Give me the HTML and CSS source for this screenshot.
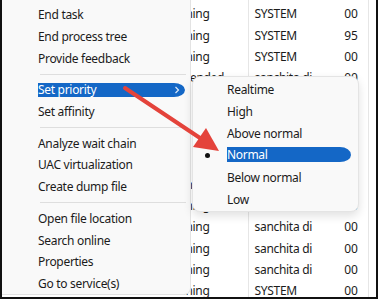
FILE: index.html
```html
<!DOCTYPE html>
<html lang="en">
<head>
    <meta charset="UTF-8">
    <meta name="viewport" content="width=device-width, initial-scale=1.0">
    <title>Task Manager - Set priority</title>
    <link rel="stylesheet" href="styles.css">
</head>
<body>

<div class="screen">
    <table class="procs">
        <colgroup>
            <col class="col-name">
            <col class="col-status">
            <col class="col-user">
            <col class="col-cpu">
            <col class="col-rest">
        </colgroup>
        <tbody>
            <tr><td></td><td>Running</td><td>LOCAL SERVI</td><td class="num">00</td><td></td></tr>
            <tr><td></td><td>Running</td><td>SYSTEM</td><td class="num">00</td><td></td></tr>
            <tr><td></td><td>Running</td><td>SYSTEM</td><td class="num">95</td><td></td></tr>
            <tr><td></td><td>Running</td><td>SYSTEM</td><td class="num">00</td><td></td></tr>
            <tr><td></td><td>Suspended</td><td>sanchita di</td><td class="num">00</td><td></td></tr>
            <tr><td></td><td></td><td></td><td></td><td></td></tr>
            <tr><td></td><td></td><td></td><td></td><td></td></tr>
            <tr><td></td><td></td><td></td><td></td><td></td></tr>
            <tr><td></td><td></td><td></td><td></td><td></td></tr>
            <tr><td></td><td>Running</td><td>sanchita di</td><td class="num">00</td><td></td></tr>
            <tr><td></td><td>Running</td><td>sanchita di</td><td class="num">00</td><td></td></tr>
            <tr><td></td><td>Running</td><td>sanchita di</td><td class="num">00</td><td></td></tr>
            <tr><td></td><td>Running</td><td>sanchita di</td><td class="num">00</td><td></td></tr>
            <tr><td></td><td>Running</td><td>sanchita di</td><td class="num">00</td><td></td></tr>
            <tr><td></td><td>Running</td><td>SYSTEM</td><td class="num">00</td><td></td></tr>
        </tbody>
    </table>

    <div class="menu main-menu">
        <div class="item">End task</div>
        <div class="item">End process tree</div>
        <div class="item">Provide feedback</div>
        <div class="sep"></div>
        <div class="item active">
            Set priority
            <svg class="chevron" width="6" height="8" viewBox="0 0 6 8"><path d="M1.5 1 L4.5 4 L1.5 7" fill="none" stroke="#dce9f8" stroke-width="1.2"/></svg>
        </div>
        <div class="item">Set affinity</div>
        <div class="sep"></div>
        <div class="item">Analyze wait chain</div>
        <div class="item">UAC virtualization</div>
        <div class="item">Create dump file</div>
        <div class="sep"></div>
        <div class="item">Open file location</div>
        <div class="item">Search online</div>
        <div class="item">Properties</div>
        <div class="item">Go to service(s)</div>
    </div>

    <div class="menu sub-menu">
        <div class="item">Realtime</div>
        <div class="item">High</div>
        <div class="item">Above normal</div>
        <div class="item active"><span class="dot"></span>Normal</div>
        <div class="item">Below normal</div>
        <div class="item">Low</div>
    </div>

    <!-- red annotation arrow -->
    <svg class="arrow" width="378" height="299" viewBox="0 0 378 299">
        <line x1="125" y1="88" x2="203" y2="140" stroke="#e4433b" stroke-width="4" stroke-linecap="round"/>
        <polygon points="219,151 193,147 206,128" fill="#e4433b"/>
    </svg>
</div>

</body>
</html>
```

FILE: styles.css
```css
body {
    margin: 0;
    font-family: "Noto Sans", "Open Sans", sans-serif;
    font-size: 12px;
    letter-spacing: -0.3px;
    color: #1b1b1b;
    background: #fff;
}
.screen {
    position: relative;
    width: 378px;
    height: 299px;
    box-sizing: border-box;
    border: 2px solid #111;
    border-top: none;
    overflow: hidden;
    background: #fff;
}
.procs {
    border-collapse: collapse;
    table-layout: fixed;
    width: 374px;
    margin-top: -18px;
}
.col-name { width: 154px; }
.col-status { width: 92px; }
.col-user { width: 70px; }
.col-cpu { width: 50px; }
.col-rest { width: 8px; }
.procs td {
    height: 21.3px;
    padding: 0 0 0 8px;
    white-space: nowrap;
    overflow: hidden;
}
.procs td:nth-child(2),
.procs td:nth-child(4) {
    border-right: 1px solid #e6e6e6;
}
.procs td:nth-child(3) {
    padding-left: 6px;
}
.procs td.num {
    text-align: right;
    padding: 0 10px 0 0;
}

/* context menus */
.menu {
    position: absolute;
    background: #f9f9f9;
    box-sizing: border-box;
}
.main-menu {
    left: 0;
    top: -8px;
    width: 189px;
    height: 303px;
    padding-top: 11px;
    border: 1px solid #e3e3e3;
    border-left: none;
    border-radius: 0 0 7px 0;
}
.sub-menu {
    left: 190px;
    top: 76px;
    width: 167px;
    height: 136px;
    padding-top: 1px;
    border: 1px solid #e4e4e4;
    border-radius: 8px;
    box-shadow: 0 4px 10px rgba(0, 0, 0, 0.12);
}
.item {
    position: relative;
    display: flex;
    align-items: center;
    box-sizing: border-box;
    height: 21.7px;
    margin: 0 5px 0 8px;
    padding-left: 28px;
    border-radius: 11px;
}
.sub-menu .item {
    height: 22px;
    margin: 0 7px 0 7px;
    padding-left: 27px;
}
.item.active {
    color: #fff;
    background: #1467c6;
    background-clip: content-box;
    padding-top: 4px;
    padding-bottom: 4px;
}
.sub-menu .item.active {
    padding-top: 3px;
    padding-bottom: 4px;
}
.chevron {
    position: absolute;
    right: 5px;
    top: 7px;
}
.dot {
    position: absolute;
    left: 5px;
    top: 9px;
    width: 5px;
    height: 5px;
    border-radius: 50%;
    background: #111;
}
.sep {
    height: 1px;
    margin: 4.5px 4px 4.5px 38px;
    background: #dedede;
}
.arrow {
    position: absolute;
    left: -2px;
    top: 0;
    pointer-events: none;
}
```
